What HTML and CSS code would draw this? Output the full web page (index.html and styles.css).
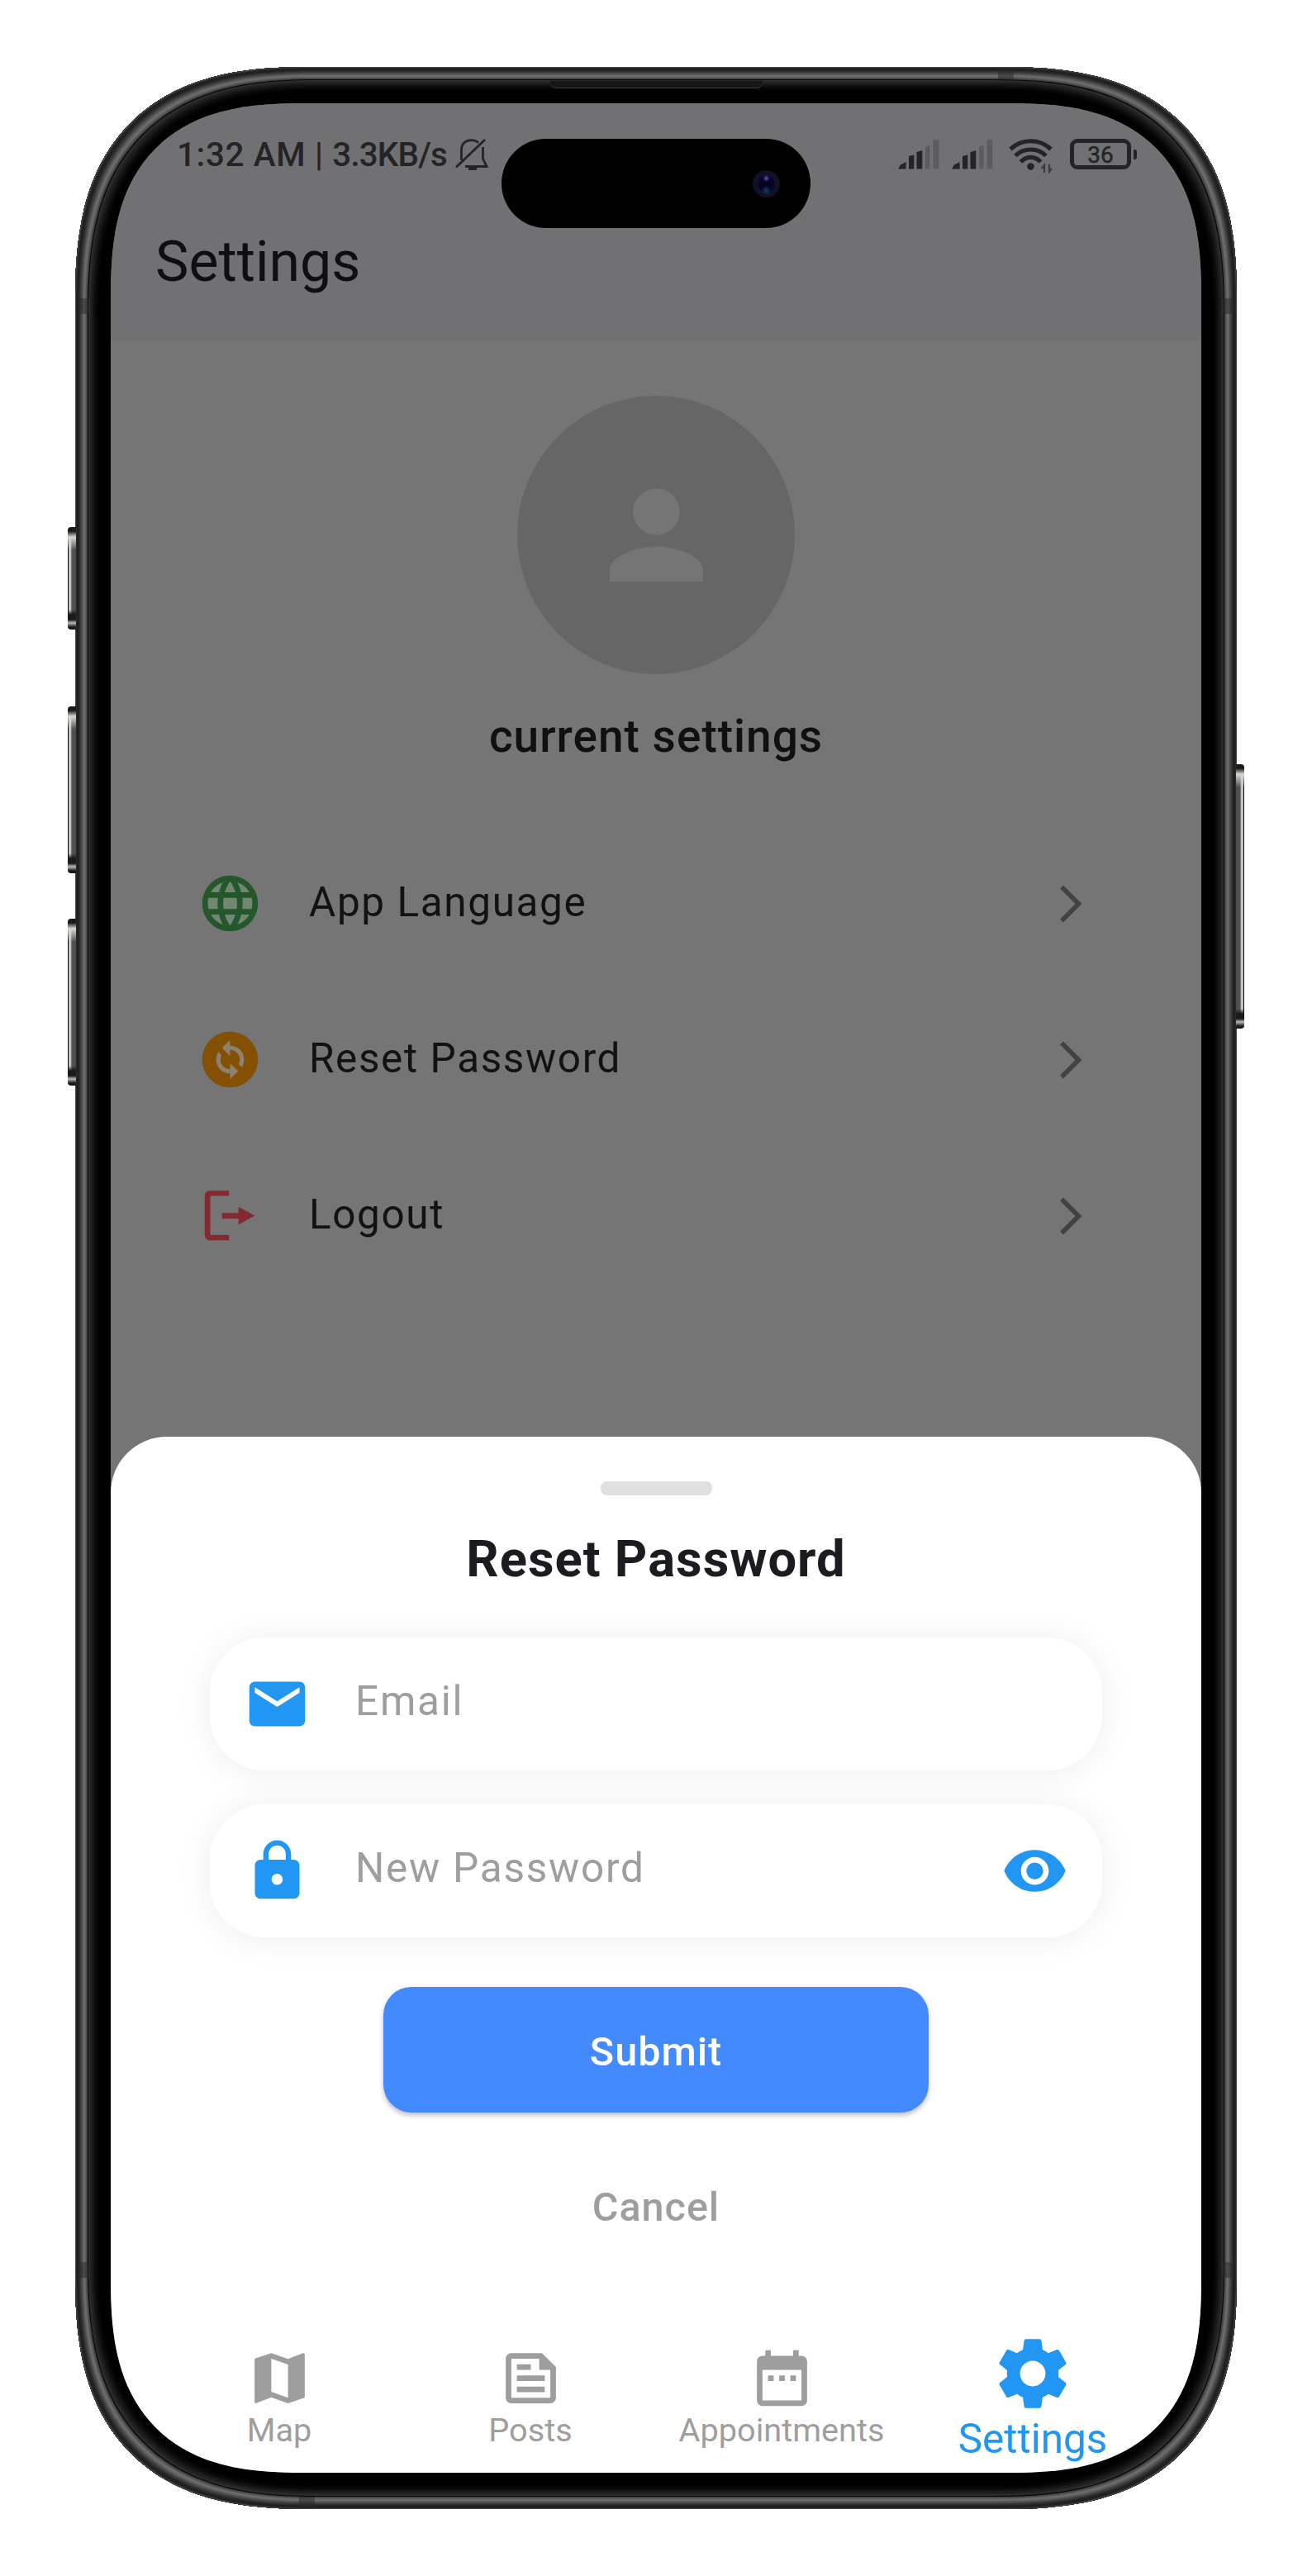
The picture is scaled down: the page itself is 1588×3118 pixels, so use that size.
FILE: index.html
```html
<!DOCTYPE html>
<html lang="en">
<head>
<meta charset="utf-8">
<title>Settings</title>
<link rel="stylesheet" href="styles.css">
</head>
<body>
<div class="phone">
  <i class="key key-action"></i>
  <i class="key key-up"></i>
  <i class="key key-down"></i>
  <i class="key key-power"></i>
  <i class="band band-tl"></i>
  <i class="band band-tr"></i>
  <i class="band band-bl"></i>
  <i class="band band-br"></i>
  <i class="band band-top"></i>
  <i class="band band-bottom"></i>
  <i class="speaker"></i>

  <main class="screen">
    <header class="appbar">
      <div class="status">
        <span class="clock"><span class="time">1:32 AM | </span><span class="speed">3.3KB/s</span></span>
        <svg class="bell" width="40" height="40" viewBox="0 0 40 40" fill="none" stroke="#242427" stroke-width="2.8">
          <path d="M1 35.500L36 2"/>
          <path d="M7.500 27V14C7.500 7 12.500 2.600 19.500 2.600c3.500 0 6.500 1.200 8.500 3.200M33.500 11v14l4.500 9.500H12"/>
          <path d="M16 37.500h10" stroke-width="3"/>
        </svg>
        <div class="radios">
          <svg width="50" height="36" viewBox="0 0 50 36" fill="#242427">
            <path d="M0 35.500l3-5 6.600-3.500v8.500zM13 20l6.300-1.500v17H13zM22.500 15l6.800-2v22.500h-6.800z"/>
            <path d="M33 8.500L38.500 7v28.500H33zM42.500 0h6.800v35.500h-6.800z" fill="#5c5c5e"/>
          </svg>
          <svg width="50" height="36" viewBox="0 0 50 36" fill="#242427">
            <path d="M0 35.500l3-5 6.600-3.500v8.500zM13 20l6.300-1.500v17H13zM22.500 15l6.800-2v22.500h-6.800z"/>
            <path d="M33 8.500L38.500 7v28.500H33zM42.500 0h6.800v35.500h-6.800z" fill="#5c5c5e"/>
          </svg>
          <svg class="wifi" width="54" height="42" viewBox="0 0 54 42" fill="none" stroke="#242427" stroke-width="5.200">
            <path d="M2 12.500C16-.5 37-.5 51 12.500"/>
            <path d="M8 20.500c10-10 27-10 37 0"/>
            <path d="M14.500 28c6.500-7.500 17.500-7.500 24 0"/>
            <circle cx="26.500" cy="33.500" r="4.300" fill="#242427" stroke="none"/>
            <path d="M43 41v-9l-3 4M49 31v9l3-4" stroke-width="2.200" stroke="#3c3c3f"/>
          </svg>
          <div class="battery">36</div>
        </div>
      </div>
      <h1>Settings</h1>
    </header>
    <div class="island"><i class="lens"></i></div>

    <section class="profile">
      <div class="avatar">
        <svg width="169" height="169" viewBox="0 0 24 24" fill="#757575"><path d="M12 12c2.210 0 4-1.790 4-4s-1.790-4-4-4-4 1.790-4 4 1.790 4 4 4zm0 2c-2.670 0-8 1.340-8 4v2h16v-2c0-2.660-5.330-4-8-4z"/></svg>
      </div>
      <h2>current settings</h2>
    </section>

    <ul class="menu">
      <li>
        <svg width="81" height="81" viewBox="0 0 24 24" fill="#25572d"><circle cx="12" cy="12" r="9.500" fill="#718673"/><path d="M11.990 2C6.470 2 2 6.480 2 12s4.470 10 9.990 10C17.520 22 22 17.520 22 12S17.520 2 11.990 2zm6.930 6h-2.950c-.32-1.250-.78-2.450-1.380-3.560 1.840.63 3.370 1.910 4.330 3.560zM12 4.040c.83 1.200 1.480 2.530 1.910 3.960h-3.820c.43-1.430 1.080-2.760 1.910-3.960zM4.260 14C4.100 13.360 4 12.690 4 12s.1-1.360.26-2h3.380c-.08.66-.14 1.320-.14 2s.06 1.340.14 2H4.260zm.82 2h2.950c.32 1.250.78 2.450 1.380 3.560-1.840-.63-3.370-1.900-4.330-3.560zm2.950-8H5.080c.96-1.660 2.490-2.930 4.330-3.560C8.810 5.550 8.350 6.750 8.030 8zM12 19.960c-.83-1.200-1.480-2.530-1.910-3.960h3.820c-.43 1.430-1.080 2.760-1.910 3.960zM14.340 14H9.660c-.09-.66-.16-1.320-.16-2s.07-1.350.16-2h4.680c.09.65.16 1.320.16 2s-.07 1.340-.16 2zm.25 5.560c.6-1.110 1.060-2.310 1.380-3.560h2.950c-.96 1.650-2.490 2.930-4.330 3.560zM16.360 14c.08-.66.14-1.320.14-2s-.06-1.340-.14-2h3.380c.16.64.26 1.310.26 2s-.1 1.360-.26 2h-3.380z"/></svg>
        <span>App Language</span>
        <svg class="chevron" width="54" height="54" viewBox="0 0 24 24" fill="#424242"><path d="M6.230 20.230L8 22l10-10L8 2 6.230 3.770 14.460 12z"/></svg>
      </li>
      <li>
        <svg width="81" height="81" viewBox="0 0 24 24" fill="#845003"><circle cx="12" cy="12" r="9" fill="#8d8272"/><path d="M12 2C6.480 2 2 6.480 2 12s4.480 10 10 10 10-4.480 10-10S17.520 2 12 2zm.06 17v-2.010H12c-1.280 0-2.560-.49-3.540-1.460-1.710-1.710-1.920-4.350-.64-6.290l1.100 1.100c-.71 1.330-.53 3.010.59 4.130.7.7 1.620 1.030 2.540 1.010v-2.140l2.830 2.830L12.060 19zm4.110-4.240-1.100-1.100c.71-1.330.53-3.010-.59-4.130C13.790 8.840 12.900 8.500 12 8.500h-.06v2.150L9.110 7.830 11.940 5v2.020c1.300-.02 2.610.45 3.600 1.450 1.700 1.700 1.910 4.350.63 6.290z"/></svg>
        <span>Reset Password</span>
        <svg class="chevron" width="54" height="54" viewBox="0 0 24 24" fill="#424242"><path d="M6.230 20.230L8 22l10-10L8 2 6.230 3.770 14.460 12z"/></svg>
      </li>
      <li>
        <svg width="81" height="81" viewBox="0 0 24 24" fill="#822a32"><path d="M11.600 3H4.700C3.700 3 2.900 3.800 2.900 4.800V19c0 1 .8 1.800 1.800 1.800h6.900v-1.900H4.900V4.900h6.700zM9.100 11v2H15v2.200L20.900 12 15 8.800V11z"/></svg>
        <span>Logout</span>
        <svg class="chevron" width="54" height="54" viewBox="0 0 24 24" fill="#424242"><path d="M6.230 20.230L8 22l10-10L8 2 6.230 3.770 14.460 12z"/></svg>
      </li>
    </ul>

    <section class="sheet">
      <div class="handle"></div>
      <h3>Reset Password</h3>
      <form class="fields">
        <label class="field">
          <svg width="81" height="81" viewBox="0 0 24 24" fill="#2196f3"><path d="M20 4H4c-1.100 0-1.990.9-1.990 2L2 18c0 1.100.9 2 2 2h16c1.100 0 2-.9 2-2V6c0-1.100-.9-2-2-2zm0 4l-8 5-8-5V6l8 5 8-5v2z"/></svg>
          <span>Email</span>
        </label>
        <label class="field">
          <svg width="81" height="81" viewBox="0 0 24 24" fill="#2196f3"><path d="M18 8h-1V6c0-2.760-2.240-5-5-5S7 3.240 7 6v2H6c-1.100 0-2 .9-2 2v10c0 1.100.9 2 2 2h12c1.100 0 2-.9 2-2V10c0-1.100-.9-2-2-2zm-6 9c-1.100 0-2-.9-2-2s.9-2 2-2 2 .9 2 2-.9 2-2 2zm3.100-9H8.900V6c0-1.710 1.390-3.100 3.100-3.100 1.710 0 3.100 1.390 3.100 3.100v2z"/></svg>
          <span>New Password</span>
          <svg width="81" height="81" viewBox="0 0 24 24" fill="#2196f3"><path d="M12 4.500C7 4.500 2.730 7.610 1 12c1.730 4.390 6 7.500 11 7.500s9.270-3.110 11-7.500c-1.730-4.390-6-7.500-11-7.500zM12 17c-2.760 0-5-2.240-5-5s2.240-5 5-5 5 2.240 5 5-2.240 5-5 5zm0-8c-1.660 0-3 1.340-3 3s1.340 3 3 3 3-1.340 3-3-1.340-3-3-3z"/></svg>
        </label>
      </form>
      <button class="submit" type="button">Submit</button>
      <button class="cancel" type="button">Cancel</button>
      <nav class="tabs">
        <a class="tab">
          <svg width="81" height="81" viewBox="0 0 24 24" fill="#9e9e9e"><path d="M20.500 3l-.16.03L15 5.100 9 3 3.360 4.900c-.21.07-.36.25-.36.48V20.500c0 .28.22.5.5.5l.16-.03L9 18.900l6 2.100 5.640-1.900c.21-.07.36-.25.36-.48V3.500c0-.28-.22-.5-.5-.5zM15 19l-6-2.110V5l6 2.110V19z"/></svg>
          <span>Map</span>
        </a>
        <a class="tab">
          <svg width="81" height="81" viewBox="0 0 24 24" fill="#9e9e9e"><path fill-rule="evenodd" d="M16 3H5c-1.100 0-2 .9-2 2v14c0 1.100.9 2 2 2h14c1.100 0 2-.9 2-2V8l-5-5zM5 5h10v4h4v10H5V5z"/><path d="M7 7h5v2H7zM7 11h10v2H7zM7 15h10v2H7z"/></svg>
          <span>Posts</span>
        </a>
        <a class="tab">
          <svg width="81" height="81" viewBox="0 0 24 24" fill="#9e9e9e"><path d="M9 11H7v2h2v-2zm4 0h-2v2h2v-2zm4 0h-2v2h2v-2zm2-7h-1V2h-2v2H8V2H6v2H5c-1.110 0-1.990.9-1.990 2L3 20c0 1.100.89 2 2 2h14c1.100 0 2-.9 2-2V6c0-1.100-.9-2-2-2zm0 16H5V9h14v11z"/></svg>
          <span>Appointments</span>
        </a>
        <a class="tab tab-active">
          <svg width="100" height="100" viewBox="0 0 24 24" fill="#2196f3"><path d="M19.430 12.980c.04-.32.07-.64.07-.98s-.03-.66-.07-.98l2.110-1.650c.19-.15.24-.42.12-.64l-2-3.460c-.12-.22-.39-.3-.61-.22l-2.490 1c-.52-.4-1.080-.73-1.690-.98l-.38-2.650C14.460 2.180 14.250 2 14 2h-4c-.25 0-.46.18-.49.42l-.38 2.650c-.61.25-1.170.59-1.690.98l-2.490-1c-.23-.09-.49 0-.61.22l-2 3.460c-.13.22-.07.49.12.64l2.110 1.650c-.04.32-.07.65-.07.98s.03.66.07.98l-2.110 1.650c-.19.15-.24.42-.12.64l2 3.460c.12.22.39.3.61.22l2.490-1c.52.4 1.080.73 1.690.98l.38 2.650c.03.24.24.42.49.42h4c.25 0 .46-.18.49-.42l.38-2.650c.61-.25 1.170-.59 1.690-.98l2.490 1c.23.09.49 0 .61-.22l2-3.460c.12-.22.07-.49-.12-.64l-2.110-1.650zM12 15.700c-2.040 0-3.700-1.660-3.700-3.700s1.660-3.700 3.700-3.700 3.700 1.660 3.700 3.700-1.660 3.700-3.700 3.700z"/></svg>
          <span>Settings</span>
        </a>
      </nav>
    </section>
  </main>
</div>
</body>
</html>
```

FILE: styles.css
```css
* { box-sizing: border-box; }
body {
  margin: 0;
  width: 1588px;
  height: 3118px;
  padding: 81px 91px;
  background: #fff;
  font-family: Roboto, "Liberation Sans", sans-serif;
  overflow: hidden;
}
h1, h2, h3, ul { margin: 0; padding: 0; }
svg { display: block; flex: none; }

/* Device body: the inset rings draw the metal rail from the edge inwards */
.phone {
  position: relative;
  width: 1406px;
  height: 2956px;
  padding: 44px 43px;
  border-radius: 285px;
  corner-shape: superellipse(1.36);
  background: #000;
  box-shadow:
    inset 0 0 0 1px #484848,
    inset 0 0 0 2px #2a2a2a,
    inset 0 0 0 4px #202020,
    inset 0 0 0 5px #262626,
    inset 0 0 0 6px #303030,
    inset 0 0 0 7px #3a3a3a,
    inset 0 0 0 8px #464646,
    inset 0 0 0 9px #525252,
    inset 0 0 0 10px #5e5e5e,
    inset 0 0 0 12px #6b6b6b,
    inset 0 0 0 13px #5e5e5e,
    inset 0 0 0 14px #4e4e4e,
    inset 0 0 0 15px #404040,
    inset 0 0 0 16px #060606,
    inset 0 0 0 18px #2c2c2c,
    inset 0 0 0 20px #222,
    inset 0 0 0 22px #191919,
    inset 0 0 0 24px #101010,
    inset 0 0 0 26px #090909,
    inset 0 0 0 28px #040404;
}

.key {
  position: absolute;
  left: -9px;
  width: 10px;
  border-radius: 4px 0 0 4px;
  background:
    linear-gradient(#1a1a1a 0, #1a1a1a 5px, #d8d8d2 12px, transparent 28px, transparent calc(100% - 24px), #1a1a1a calc(100% - 18px), #1a1a1a calc(100% - 12px), #bbb calc(100% - 8px), #1a1a1a calc(100% - 3px)),
    linear-gradient(90deg, #222 0, #222 1px, #f0f0ee 2px, #e0e0de 3px, #555 5px, #4a4a4a);
}
.key-action { top: 557px; height: 124px; }
.key-up { top: 774px; height: 202px; }
.key-down { top: 1031px; height: 202px; }
.key-power {
  left: 1405px;
  top: 844px;
  height: 320px;
  transform: scaleX(-1);
}

.band { position: absolute; width: 12px; height: 19px; background: rgba(40, 40, 40, .5); }
.band-tl { left: 4px; top: 280px; }
.band-tr { right: 4px; top: 280px; }
.band-bl { left: 4px; bottom: 280px; }
.band-br { right: 4px; bottom: 280px; }
.band-top { left: 1117px; top: 1px; width: 19px; height: 14px; }
.band-bottom { left: 271px; bottom: 1px; width: 19px; height: 14px; }
.speaker {
  position: absolute;
  left: 575px;
  top: 17px;
  width: 257px;
  height: 9px;
  border-radius: 0 0 7px 7px;
  background: #161616;
  border-bottom: 1px solid #3a3a3a;
}

.screen {
  position: relative;
  display: flex;
  flex-direction: column;
  width: 1320px;
  height: 2868px;
  border-radius: 235px;
  corner-shape: superellipse(1.39);
  overflow: hidden;
  background: #757575;
}

.appbar { height: 287px; background: #717173; }
.status {
  display: flex;
  align-items: center;
  height: 124px;
  padding: 0 76px 0 80px;
  color: #242427;
}
.clock { font-size: 40.4px; font-weight: 500; white-space: pre; }
.time { letter-spacing: .65px; }
.speed { letter-spacing: -.85px; }
.bell { margin-left: 10px; }
.radios { display: flex; align-items: center; gap: 15px; margin-left: auto; margin-top: -1px; }
.radios .wifi { margin: 4px 5px 0 4px; }
.battery {
  position: relative;
  width: 74px;
  height: 37px;
  margin-right: 9px;
  border: 5px solid #242427;
  border-radius: 9px;
  font-size: 28px;
  line-height: 29px;
  text-align: center;
  -webkit-text-stroke: .5px #242427;
}
.battery::after {
  content: "";
  position: absolute;
  right: -12px;
  top: 8px;
  width: 4px;
  height: 12px;
  border-radius: 0 3px 3px 0;
  background: #242427;
}
.appbar h1 {
  padding-left: 54px;
  font-size: 68px;
  font-weight: 400;
  line-height: 137px;
  color: #0f0f11;
}

.island {
  position: absolute;
  left: 473px;
  top: 43px;
  width: 374px;
  height: 108px;
  border-radius: 54px;
  background: #000;
}
.lens {
  position: absolute;
  left: 304px;
  top: 38px;
  width: 33px;
  height: 33px;
  border-radius: 50%;
  background:
    radial-gradient(circle at 50% 30%, #6a689c 0, rgba(50, 48, 120, .4) 3px, transparent 5px),
    radial-gradient(circle at 50% 74%, #153f5c 0, transparent 6px),
    radial-gradient(circle, #02021c 0, #04042c 9px, #10102a 11px, #0e0e20);
}

.profile { display: flex; flex-direction: column; align-items: center; padding-top: 67px; }
.avatar {
  display: flex;
  align-items: center;
  justify-content: center;
  width: 336px;
  height: 337px;
  border-radius: 50%;
  background: #666;
}
.profile h2 {
  margin-top: 43px;
  font-size: 55px;
  font-weight: 500;
  line-height: 64px;
  letter-spacing: 1px;
  color: #101010;
}

.menu { margin-top: 76px; list-style: none; }
.menu li {
  display: flex;
  align-items: center;
  height: 189px;
  padding: 0 131px 0 104px;
}
.menu span {
  margin: -3px 0 0 55px;
  font-size: 49.5px;
  letter-spacing: 1.6px;
  color: #121212;
}
.chevron { margin-left: auto; }

.sheet {
  display: flex;
  flex-direction: column;
  align-items: center;
  height: 1254px;
  margin-top: auto;
  padding-top: 54px;
  border-radius: 68px 68px 0 0;
  background: #fff;
}
.handle { width: 135px; height: 17px; border-radius: 8px; background: #e0e0e0; }
.sheet h3 {
  margin-top: 37px;
  font-size: 61.5px;
  font-weight: 700;
  line-height: 80px;
  letter-spacing: 1px;
  color: #1c1b1f;
}
.fields {
  display: flex;
  flex-direction: column;
  gap: 41px;
  width: 1080px;
  margin-top: 55px;
  isolation: isolate;
}
.field {
  position: relative;
  display: flex;
  align-items: center;
  height: 161px;
  padding: 0 41px;
  border-radius: 67px;
  background: #fff;
}
.field::before {
  content: "";
  position: absolute;
  inset: 0;
  z-index: -1;
  border-radius: 67px;
  box-shadow: 0 2px 36px 7px rgba(0, 0, 0, .05);
}
.field span {
  flex: 1;
  margin: -7px 0 0 54px;
  font-size: 49.5px;
  letter-spacing: 1.75px;
  color: #9e9e9e;
}
button {
  border: 0;
  padding: 0;
  background: none;
  font: 500 48.5px/56px Roboto, "Liberation Sans", sans-serif;
  letter-spacing: 1px;
}
.submit {
  width: 660px;
  height: 152px;
  margin-top: 60px;
  padding-top: 5px;
  border-radius: 34px;
  background: #448aff;
  color: #fff;
  box-shadow: 0 4px 5px rgba(0, 0, 0, .16), 0 2px 8px rgba(0, 0, 0, .1);
}
.cancel { margin-top: 87px; color: #9e9e9e; }
.tabs { display: flex; margin-top: 121px; }
.tab {
  display: flex;
  flex-direction: column;
  align-items: center;
  width: 304px;
  padding-top: 17px;
  color: #9e9e9e;
  font-size: 39.7px;
  line-height: 46px;
}
.tab-active {
  padding-top: 2px;
  color: #2196f3;
  font-size: 49.500px;
  line-height: 58px;
}
```
